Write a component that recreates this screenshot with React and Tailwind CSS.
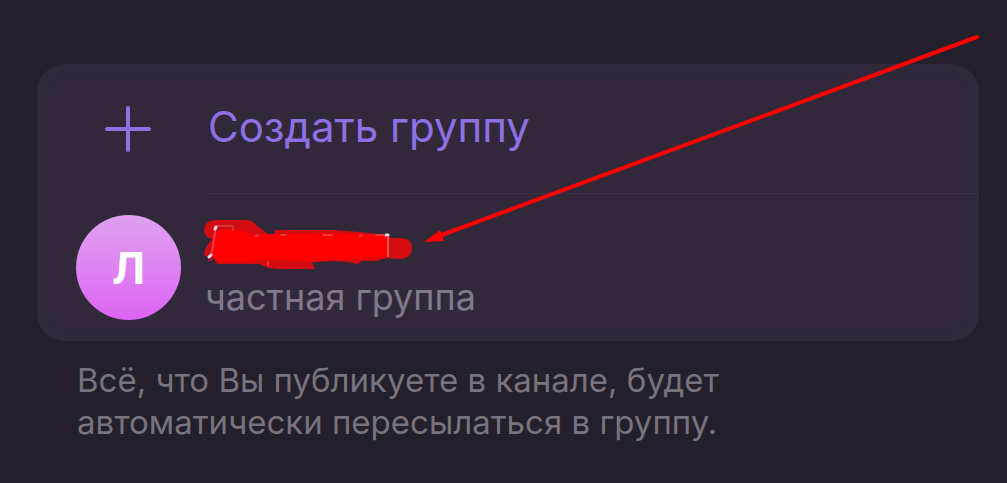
function PlusIcon() {
  return (
    <svg viewBox="0 0 48 48" className="size-12" fill="none" stroke="#8f70e4" strokeWidth="4" strokeLinecap="round" aria-hidden="true">
      <path d="M3 24H45" />
      <path d="M24 3V45" />
    </svg>
  );
}

function HiddenName() {
  return (
    <svg viewBox="1 -2 208 52" className="h-[52px] w-[208px] overflow-visible" role="img" aria-label="Скрытое название">
      <g fill="#d20c10">
        <path d="M11 0H40Q50 0 53 6L60 11L64 14H70L71 10H130L155 12L183 15L187 18H196Q208 18 208 28Q208 38 196 39L183 38L172 41L158 41L154 44L143 42L128 41L108 42L111 49H75L64 48L55 44H13L10 38L1 36Q-1 32 3 26L8 19Q0 17 0 10Q0 1 11 0Z" />
        <path d="M3 42L11 34L8 40Z" />
      </g>
      <path d="M9 14Q21 7 39 11L52 15L80 14L130 13L180 15L185 19V36L160 39L130 40L108 42L96 41L62 40L40 42H14L7 35Z" fill="#ff0000" />
      <g fill="none" strokeLinecap="round">
        <path d="M7 35L9 26L12 7" stroke="#e83c48" strokeWidth="2" />
        <path d="M13 6H29V10" stroke="#d9333a" strokeWidth="2" />
        <path d="M5 37L7 35M11 9L12 7M182 15H184" stroke="#f5d5e2" strokeWidth="3" />
        <path d="M184 17V36" stroke="#e3555b" strokeWidth="2" />
        <path d="M64 42V45M52 16L54 15M77 15H82M119 15H128M156 16L158 15M172 15H179" stroke="#ef363b" strokeWidth="2" />
      </g>
    </svg>
  );
}

function Arrow() {
  return (
    <svg viewBox="0 0 560 212" className="pointer-events-none absolute -top-8 left-[386px] h-[212px] w-[560px]" aria-hidden="true">
      <path d="M16 204L554 5" stroke="#ff0000" strokeWidth="4" strokeLinecap="round" />
      <path d="M1 210L17 198L21 209Z" fill="#ff0000" />
    </svg>
  );
}

export default function App() {
  return (
    <main className="min-h-screen bg-[#231f2b] pt-16 pr-7 pb-10 pl-[37px] font-['Inter','Liberation_Sans',sans-serif]">
      <section className="relative rounded-[28px] bg-[#31293a] shadow-[inset_0_0_10px_3px_#2f2b3b]">
        <button type="button" className="flex h-[129px] w-full items-center text-left text-[#8f70e4]">
          <span className="flex w-[171px] shrink-0 justify-center pl-2.5">
            <PlusIcon />
          </span>
          <span className="pb-1 text-[42px] leading-[50px]">Создать группу</span>
        </button>
        <div className="ml-[168px] h-px bg-[#3b3345]" />
        <button type="button" className="flex h-[147px] w-full items-center pl-[39px] text-left">
          <span className="mr-6 flex size-[105px] shrink-0 items-center justify-center rounded-full bg-linear-to-b from-[#dfa0ef] to-[#dc62f3] text-[44px] font-bold text-white">
            Л
          </span>
          <span className="flex flex-col gap-1.5">
            <HiddenName />
            <span className="text-[36px] leading-[42px] text-[#817889]">частная группа</span>
          </span>
        </button>
        <Arrow />
      </section>
      <p className="max-w-[720px] pt-[18px] pl-10 text-[33px] leading-[42px] text-[#78737d]">
        Всё, что Вы публикуете в канале, будет автоматически пересылаться в группу.
      </p>
    </main>
  );
}
